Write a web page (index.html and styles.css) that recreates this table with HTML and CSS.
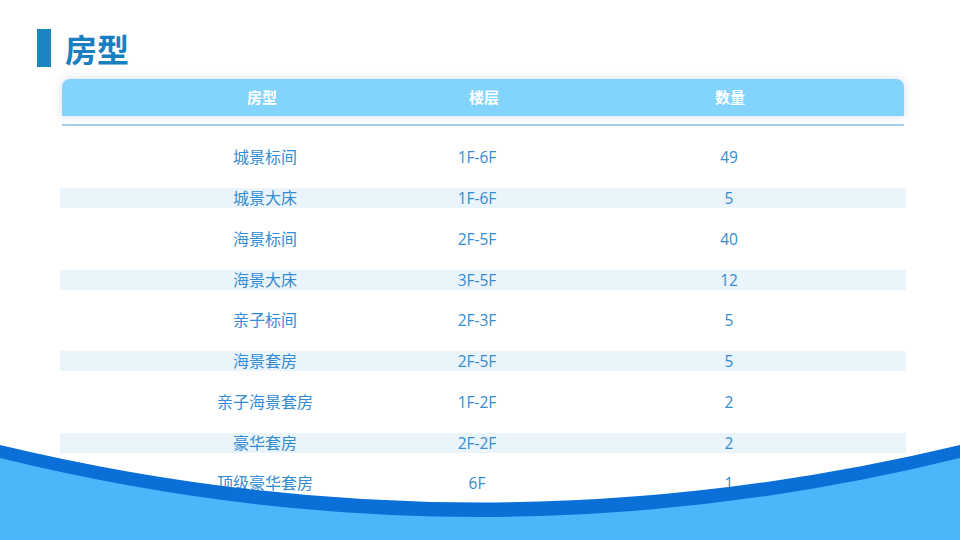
FILE: index.html
```html
<!DOCTYPE html>
<html lang="zh">
<head>
<meta charset="utf-8">
<link rel="stylesheet" href="styles.css">
</head>
<body>
<div class="page">
  <div class="title-row">
    <span class="title-bar"></span>
    <h1 class="title">房型</h1>
  </div>
  <div class="table">
    <div class="head cols">
      <span>房型</span><span>楼层</span><span>数量</span>
    </div>
    <div class="rule"></div>
    <div class="rows">
      <div class="row"><div class="band cols"><span>城景标间</span><span>1F-6F</span><span>49</span></div></div>
      <div class="row alt"><div class="band cols"><span>城景大床</span><span>1F-6F</span><span>5</span></div></div>
      <div class="row"><div class="band cols"><span>海景标间</span><span>2F-5F</span><span>40</span></div></div>
      <div class="row alt"><div class="band cols"><span>海景大床</span><span>3F-5F</span><span>12</span></div></div>
      <div class="row"><div class="band cols"><span>亲子标间</span><span>2F-3F</span><span>5</span></div></div>
      <div class="row alt"><div class="band cols"><span>海景套房</span><span>2F-5F</span><span>5</span></div></div>
      <div class="row"><div class="band cols"><span>亲子海景套房</span><span>1F-2F</span><span>2</span></div></div>
      <div class="row alt"><div class="band cols"><span>豪华套房</span><span>2F-2F</span><span>2</span></div></div>
      <div class="row"><div class="band cols"><span>顶级豪华套房</span><span>6F</span><span>1</span></div></div>
    </div>
  </div>
  <svg class="wave" width="960" height="540" viewBox="0 0 960 540" aria-hidden="true">
    <path d="M0,445 Q480,560 960,445 L960,540 L0,540 Z" fill="#0a70d8"/>
    <path d="M0,458 Q480,576 960,458 L960,540 L0,540 Z" fill="#4cb6fb"/>
  </svg>
</div>
</body>
</html>
```

FILE: styles.css
```css
html, body {
  margin: 0;
  padding: 0;
  background: #ffffff;
}

.page {
  position: relative;
  width: 960px;
  height: 540px;
  overflow: hidden;
  font-family: "Open Sans", "Noto Sans CJK SC", sans-serif;
}

.title-row {
  display: flex;
  align-items: center;
  gap: 14px;
  padding: 29px 0 0 37px;
  height: 38px;
}

.title-bar {
  display: block;
  width: 14px;
  height: 38px;
  background: #1b86c2;
}

.title {
  margin: 0;
  font-family: "Noto Sans CJK SC", sans-serif;
  font-size: 32px;
  font-weight: 700;
  line-height: 38px;
  color: #1a7fc0;
}

.table {
  margin: 12px 0 0 60px;
  width: 846px;
}

.cols {
  display: grid;
  grid-template-columns: 250px 174px 330px;
  padding-left: 80px;
  align-items: center;
}

.cols span {
  text-align: center;
}

.head {
  margin: 0 2px;
  height: 37px;
  padding-bottom: 3px;
  box-sizing: border-box;
  background: #83d4fd;
  border-radius: 8px 8px 0 0;
  box-shadow: 0 0 10px rgba(110, 140, 220, 0.3);
  color: #ffffff;
  font-family: "Noto Sans CJK SC", sans-serif;
  font-weight: 700;
  font-size: 15px;
  padding-left: 75px;
}

.head span:nth-child(2) { padding-left: 20px; }
.head span:nth-child(3) { padding-left: 8px; }

.rule {
  margin: 8px 2px 0 2px;
  height: 2px;
  background: #a3cfee;
}

.rows {
  margin-top: 11px;
}

.row {
  height: 40.75px;
  display: flex;
  align-items: center;
}

.band {
  width: 100%;
  height: 20px;
  color: #348cd2;
  font-size: 15.5px;
  line-height: 20px;
}

.band span:first-child {
  font-size: 16px;
}

.row.alt .band {
  background: #eaf4fb;
}

.wave {
  position: absolute;
  left: 0;
  top: 0;
  pointer-events: none;
}
```
